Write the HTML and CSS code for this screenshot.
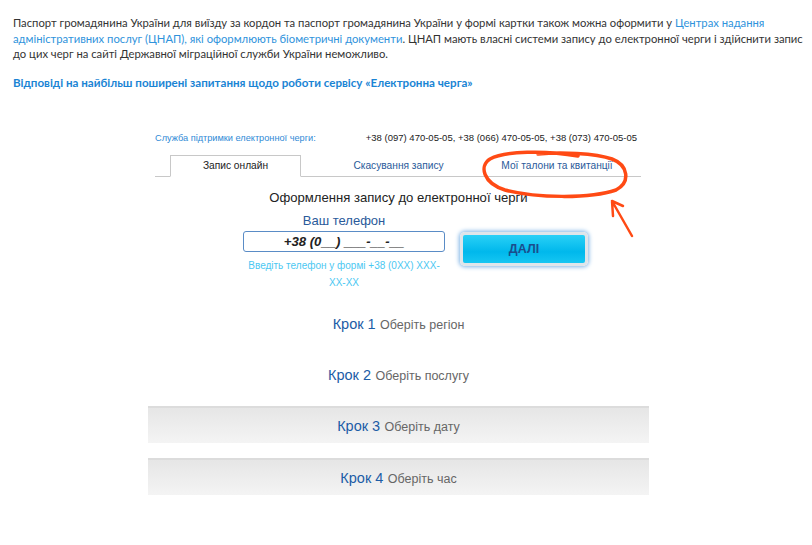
FILE: index.html
```html
<!DOCTYPE html>
<html lang="uk">
<head>
<meta charset="utf-8">
<link rel="stylesheet" href="styles.css">
</head>
<body>
<div class="page">
  <p class="intro">Паспорт громадянина України для виїзду за кордон та паспорт громадянина України у формі картки також можна оформити у <a class="lnk" href="#">Центрах надання адміністративних послуг (ЦНАП), які оформлюють біометричні документи</a>. ЦНАП мають власні системи запису до електронної черги і здійснити запис до цих черг на сайті Державної міграційної служби України неможливо.</p>
  <p class="faq"><a href="#">Відповіді на найбільш поширені запитання щодо роботи сервісу «Електронна черга»</a></p>

  <div class="widget">
    <div class="support">
      <span class="support-label">Служба підтримки електронної черги:</span>
      <span class="support-phones">+38 (097) 470-05-05, +38 (066) 470-05-05, +38 (073) 470-05-05</span>
    </div>
    <div class="tabs">
      <div class="tab active">Запис онлайн</div>
      <div class="tab">Скасування запису</div>
      <div class="tab">Мої талони та квитанції</div>
    </div>
    <h2 class="title">Оформлення запису до електронної черги</h2>
    <div class="form">
      <div class="phone-col">
        <div class="phone-label">Ваш телефон</div>
        <div class="phone-input">+38 (0__) ___-__-__</div>
        <div class="hint">Введіть телефон у формі +38 (0XX) XXX-XX-XX</div>
      </div>
      <div class="btn-wrap"><button class="btn">ДАЛІ</button></div>
    </div>
    <div class="step plain s1"><span class="num">Крок 1</span> <span class="desc">Оберіть регіон</span></div>
    <div class="step plain s2"><span class="num">Крок 2</span> <span class="desc">Оберіть послугу</span></div>
    <div class="step box s3"><span class="num">Крок 3</span> <span class="desc">Оберіть дату</span></div>
    <div class="step box s4"><span class="num">Крок 4</span> <span class="desc">Оберіть час</span></div>
  </div>
</div>
<svg class="annot" width="812" height="545" viewBox="0 0 812 545">
  <path d="M578 156 C545 150 505 151 490 159 C479 166 483 183 505 190 C535 198 590 199 616 190 C631 182 628 165 612 159 C595 153 560 152 538 154" fill="none" stroke="#ff4a14" stroke-width="3.5" stroke-linecap="round" stroke-linejoin="round"/>
  <path d="M632 236 L612 201 M612 201 L613 216 M612 201 L623 206" fill="none" stroke="#ff4a14" stroke-width="2.5" stroke-linecap="round"/>
</svg>
</body>
</html>
```

FILE: styles.css
```css
html, body {
  margin: 0;
  padding: 0;
  background: #fff;
}
.page {
  padding: 15px 0 0 13px;
  font-family: Lato, "Open Sans", "Liberation Sans", sans-serif;
}
.intro {
  margin: 0;
  font-size: 11.25px;
  line-height: 15.5px;
  color: #333;
}
.intro a.lnk {
  color: #2f93dc;
  text-decoration: none;
}
.faq {
  margin: 13px 0 0;
  font-size: 11.6px;
  line-height: 16px;
  font-weight: 700;
}
.faq a {
  color: #1a84d4;
  text-decoration: none;
}
.widget {
  width: 501px;
  margin: 41px 0 0 135px;
  font-family: "Liberation Sans", Arial, sans-serif;
}
.support {
  display: flex;
  justify-content: space-between;
  align-items: baseline;
  padding: 0 12px 0 7px;
  font-size: 9.5px;
  line-height: 12px;
}
.support-label { color: #2f8ad6; font-size: 9.2px; }
.support-phones { color: #222; }
.tabs {
  display: flex;
  margin: 11px 8px 0 7px;
  border-bottom: 1px solid #c8c8c8;
  height: 21px;
}
.tab {
  font-size: 10.2px;
  color: #2a5a9a;
  display: flex;
  align-items: center;
  justify-content: center;
}
.tab:nth-child(1) { margin-left: 15px; width: 129px; }
.tab:nth-child(2) { width: 195px; }
.tab:nth-child(3) { width: 122px; }
.tab.active {
  color: #222;
  border: 1px solid #c8c8c8;
  border-bottom: 1px solid #fff;
  margin-bottom: -1px;
  background: #fff;
}
.title {
  margin: 13px 0 0;
  text-align: center;
  font-weight: 400;
  font-size: 13.1px;
  line-height: 16px;
  color: #222;
}
.form {
  display: flex;
  margin-top: 7px;
  padding-left: 95px;
}
.phone-col {
  width: 202px;
  text-align: center;
}
.phone-label {
  font-size: 13px;
  line-height: 16px;
  color: #2a5a9a;
}
.phone-input {
  margin-top: 2px;
  height: 19px;
  border: 1px solid #5a8cc6;
  border-radius: 3px;
  font-size: 13.2px;
  line-height: 19px;
  font-style: italic;
  font-weight: 700;
  color: #222;
}
.hint {
  margin-top: 5px;
  padding: 0 4px;
  font-size: 10px;
  line-height: 17px;
  color: #4cc8f2;
}
.btn-wrap {
  margin: 19px 0 0 15px;
}
.btn {
  width: 128px;
  height: 34px;
  border: 3px solid #dfe5ea;
  border-radius: 5px;
  background: linear-gradient(#2ad0f6, #00b8ec 60%, #16c6f2);
  box-shadow: 0 0 4px 1px #7fb4e6;
  color: #1b4d8c;
  font-family: "Liberation Sans", Arial, sans-serif;
  font-weight: 700;
  font-size: 12.5px;
  padding: 0;
}
.step {
  text-align: center;
  height: 37px;
  line-height: 37px;
}
.step .num {
  font-size: 14.5px;
  color: #1c5ca6;
}
.step .desc {
  font-size: 12.5px;
  color: #666;
}
.s1 { margin-top: 14px; }
.s2 { margin-top: 14px; }
.s3 { margin-top: 13px; }
.s4 { margin-top: 15px; }
.box {
  border-top: 2px solid #dcdcdc;
  height: 35px;
  line-height: 35px;
  background: linear-gradient(#e6e6e6, #f4f4f4);
}
.annot {
  position: absolute;
  left: 0;
  top: 0;
  pointer-events: none;
}
```
